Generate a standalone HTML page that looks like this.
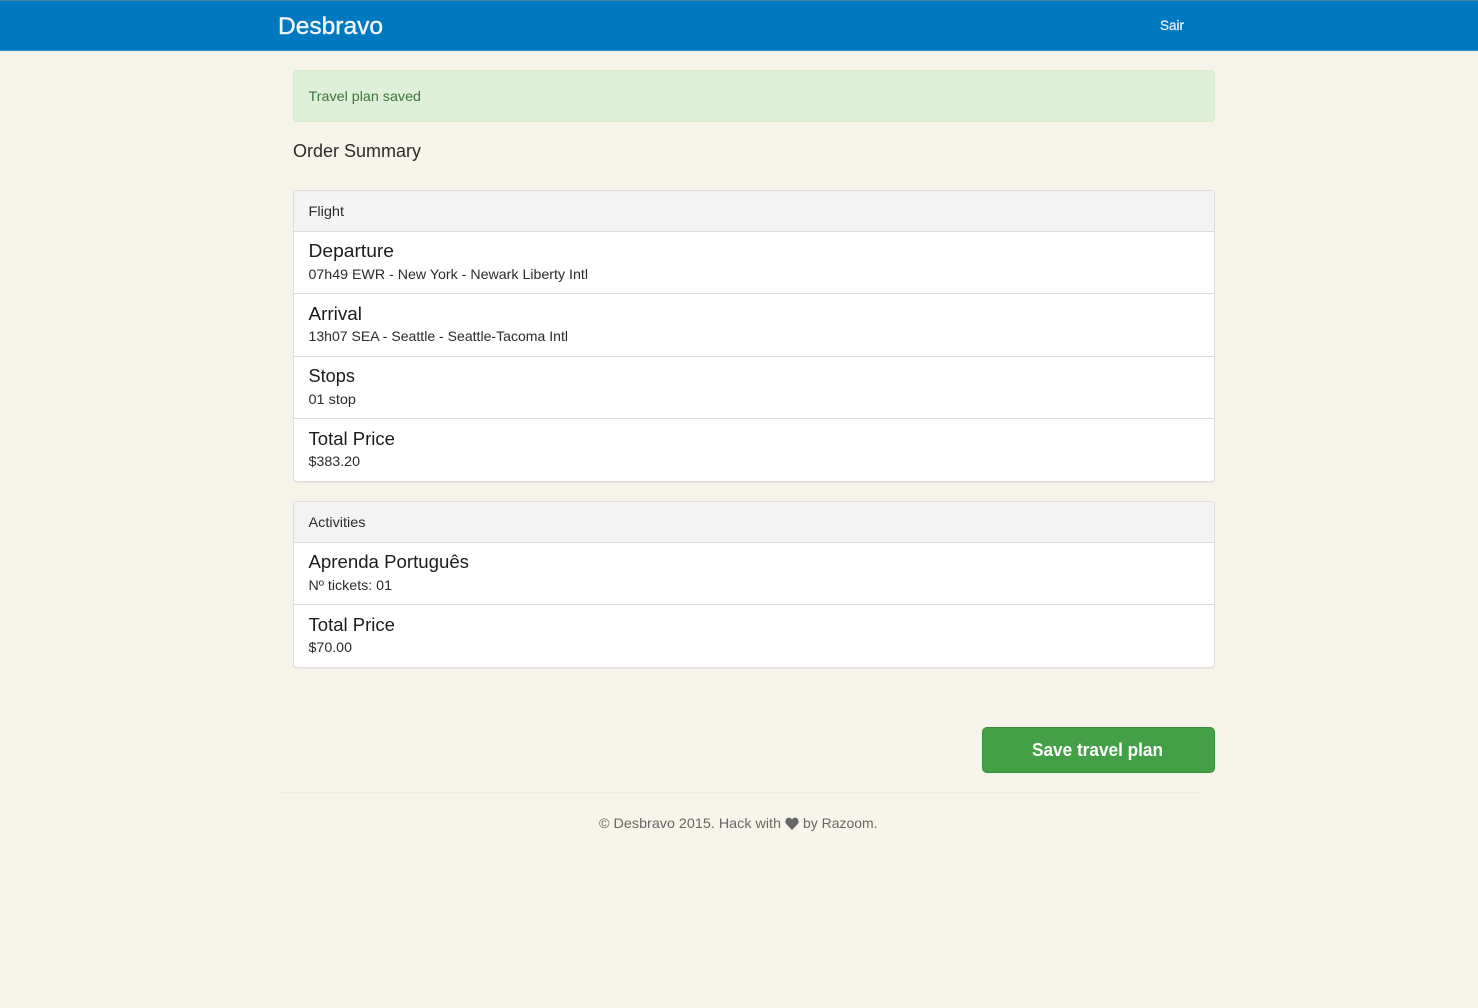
<!DOCTYPE html>
<html lang="en">
<head>
<meta charset="utf-8">
<title>Desbravo</title>
<style>
html,body{margin:0;padding:0;width:1478px;height:1008px;overflow:hidden;background:#f7f5ea;}
body{position:relative;font-family:"Liberation Sans",sans-serif;}
.b{position:absolute;box-sizing:border-box;}
.nav{left:0;top:0;width:1478px;height:51px;background:#0079c1;border-top:1px solid #4f7f9f;border-bottom:1px solid #2b8fcb;}
.alert{left:293px;top:70px;width:922px;height:52px;background:#dff0d8;border:1px solid #d8ebcd;border-radius:4px;}
.panel{left:293px;width:922px;background:#fff;border:1px solid #dedede;border-radius:4px;box-shadow:0 1px 1px rgba(0,0,0,.05);overflow:hidden;}
.head{position:absolute;left:0;top:0;right:0;height:41px;background:#f4f4f4;border-bottom:1px solid #ddd;box-sizing:border-box;}
.div{position:absolute;left:0;right:0;height:1px;background:#ddd;}
.btn{left:981.5px;top:727px;width:233.5px;height:46px;background:#43a047;border:1px solid #388e3c;border-radius:5px;}
.hr{left:280px;top:792px;width:920px;height:1px;background:#efeee6;}
svg{position:absolute;left:0;top:0;}
text{font-family:"Liberation Sans",sans-serif;}
</style>
</head>
<body>
<div class="b nav"></div>
<div class="b alert"></div>
<div class="b panel" style="top:190px;height:292px;">
  <div class="head"></div>
  <div class="div" style="top:102px"></div>
  <div class="div" style="top:165px"></div>
  <div class="div" style="top:227px"></div>
</div>
<div class="b panel" style="top:501px;height:167px;">
  <div class="head"></div>
  <div class="div" style="top:102px"></div>
</div>
<div class="b btn"></div>
<div class="b hr"></div>
<svg width="1478" height="1008" viewBox="0 0 1478 1008" xmlns="http://www.w3.org/2000/svg">
  <text x="278" y="34" font-size="24" fill="#f2f6f8" stroke="#f2f6f8" stroke-width="0.4" textLength="105" lengthAdjust="spacingAndGlyphs">Desbravo</text>
  <text x="1160" y="30" font-size="14" fill="#eef4f8" stroke="#eef4f8" stroke-width="0.2" textLength="24" lengthAdjust="spacingAndGlyphs">Sair</text>
  <text x="308.5" y="101" font-size="14" fill="#3c763d" textLength="112.5" lengthAdjust="spacingAndGlyphs">Travel plan saved</text>
  <text x="293" y="157" font-size="18" fill="#2b2b2b" textLength="128" lengthAdjust="spacingAndGlyphs">Order Summary</text>

  <text x="308.5" y="216" font-size="14" fill="#2b2b2b" textLength="35.5" lengthAdjust="spacingAndGlyphs">Flight</text>
  <text x="308.5" y="257" font-size="18" fill="#1c1c1c" textLength="85.5" lengthAdjust="spacingAndGlyphs">Departure</text>
  <text x="308.5" y="279" font-size="14" fill="#2b2b2b" textLength="279.5" lengthAdjust="spacingAndGlyphs">07h49 EWR - New York - Newark Liberty Intl</text>
  <text x="308.5" y="320" font-size="18" fill="#1c1c1c" textLength="53.5" lengthAdjust="spacingAndGlyphs">Arrival</text>
  <text x="308.5" y="341" font-size="14" fill="#2b2b2b" textLength="259.5" lengthAdjust="spacingAndGlyphs">13h07 SEA - Seattle - Seattle-Tacoma Intl</text>
  <text x="308.5" y="382" font-size="18" fill="#1c1c1c" textLength="46.5" lengthAdjust="spacingAndGlyphs">Stops</text>
  <text x="308.5" y="404" font-size="14" fill="#2b2b2b" textLength="47.5" lengthAdjust="spacingAndGlyphs">01 stop</text>
  <text x="308.5" y="445" font-size="18" fill="#1c1c1c" textLength="86.5" lengthAdjust="spacingAndGlyphs">Total Price</text>
  <text x="308.5" y="466" font-size="14" fill="#2b2b2b" textLength="51.5" lengthAdjust="spacingAndGlyphs">$383.20</text>

  <text x="308.5" y="527" font-size="14" fill="#2b2b2b" textLength="57" lengthAdjust="spacingAndGlyphs">Activities</text>
  <text x="308.5" y="568" font-size="18" fill="#1c1c1c" textLength="160.5" lengthAdjust="spacingAndGlyphs">Aprenda Português</text>
  <text x="308.5" y="590" font-size="14" fill="#2b2b2b" textLength="83.5" lengthAdjust="spacingAndGlyphs">Nº tickets: 01</text>
  <text x="308.5" y="631" font-size="18" fill="#1c1c1c" textLength="86.5" lengthAdjust="spacingAndGlyphs">Total Price</text>
  <text x="308.5" y="652" font-size="14" fill="#2b2b2b" textLength="43.5" lengthAdjust="spacingAndGlyphs">$70.00</text>

  <text x="1032" y="756" font-size="18" font-weight="700" fill="#fff" textLength="131" lengthAdjust="spacingAndGlyphs">Save travel plan</text>

  <text x="599" y="828" font-size="14" fill="#666" textLength="182" lengthAdjust="spacingAndGlyphs">© Desbravo 2015. Hack with</text>
  <path d="M792 830 L786.6 824.4 C784.6 822.2 785.2 818.4 788.2 817.7 C789.8 817.4 791.2 818.2 792 819.6 C792.8 818.2 794.2 817.4 795.8 817.7 C798.8 818.4 799.4 822.2 797.4 824.4 Z" fill="#666"/>
  <text x="803" y="828" font-size="14" fill="#666" textLength="74.5" lengthAdjust="spacingAndGlyphs">by Razoom.</text>
</svg>
</body>
</html>
